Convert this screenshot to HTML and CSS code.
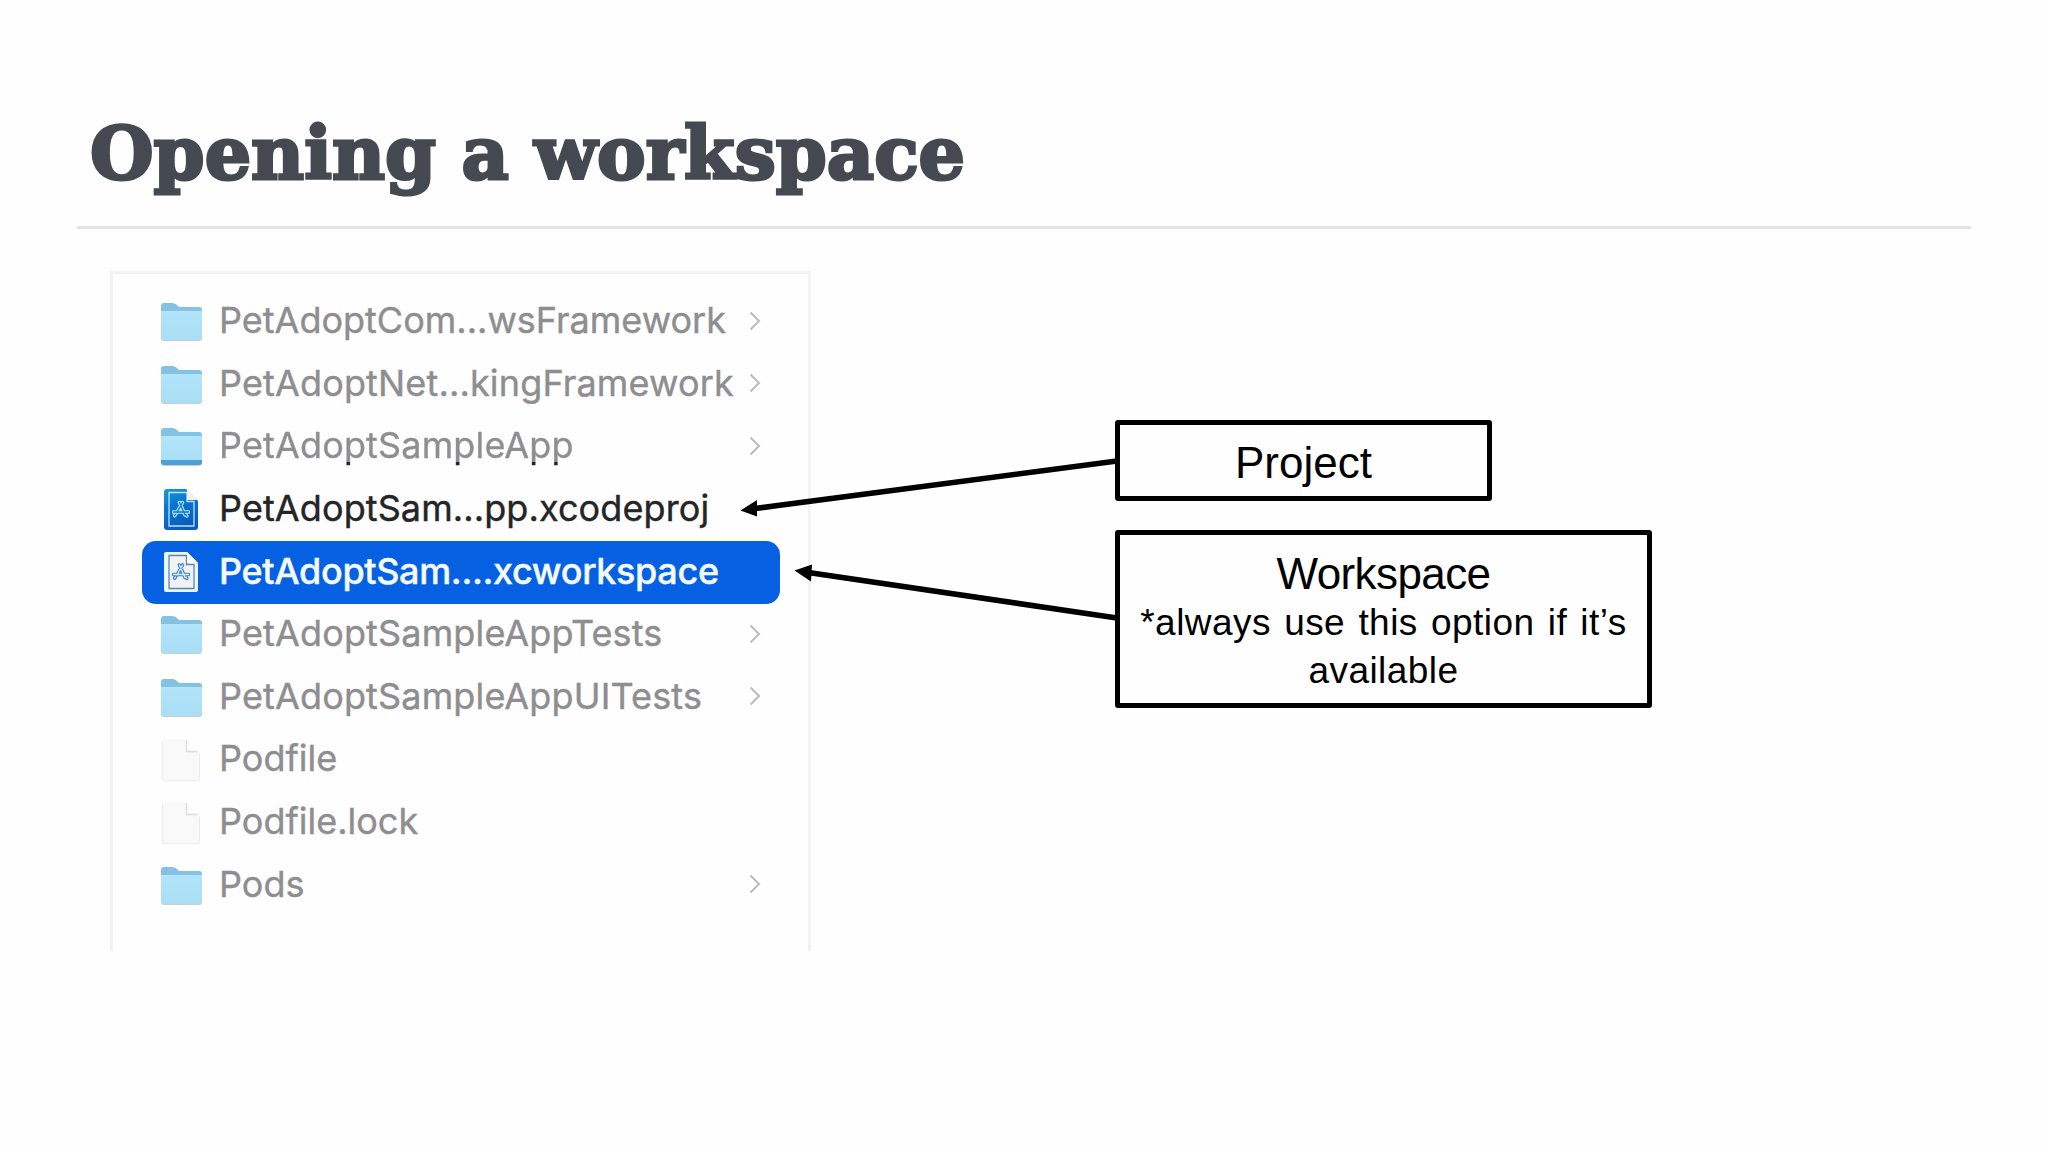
FILE: index.html
```html
<!DOCTYPE html>
<html lang="en">
<head>
    <meta charset="UTF-8">
    <meta name="viewport" content="width=device-width, initial-scale=1.0">
    <title>Opening a workspace</title>
    <link rel="stylesheet" href="styles.css">
</head>
<body>

<!-- Shared icons -->
<svg class="defs" width="0" height="0">
    <defs>
        <linearGradient id="folder-front" x1="0" y1="0" x2="0" y2="1">
            <stop offset="0" stop-color="#b2e4fa"/>
            <stop offset="1" stop-color="#a9def5"/>
        </linearGradient>
        <linearGradient id="project-blue" x1="0" y1="0" x2="0.4" y2="1">
            <stop offset="0" stop-color="#1c9bc8"/>
            <stop offset="0.4" stop-color="#0878d4"/>
            <stop offset="1" stop-color="#0a5cbc"/>
        </linearGradient>
        <symbol id="folder" viewBox="0 0 44 44">
            <path d="M2 36V6q0-3 3-3h8q3 0 5 2l2 2h20q3 0 3 3v26z" fill="#84c2e3"/>
            <path d="M2 12h41v26q0 3-3 3H5q-3 0-3-3z" fill="#9fb3bd" opacity="0.6"/>
            <path d="M2 11h41v26q0 3-3 3H5q-3 0-3-3z" fill="url(#folder-front)"/>
        </symbol>
        <symbol id="file" viewBox="0 0 44 44">
            <path d="M7 2h20l14 14v24q0 3-3 3H6q-3 0-3-3V5q0-3 4-3z" fill="#ececec"/>
            <path d="M7 1h20l13 13v25q0 3-3 3H7q-3 0-3-3V4q0-3 3-3z" fill="#f9f9fa"/>
            <path d="M28 1v12h12z" fill="#fdfdfd"/>
            <path d="M27.500 2v11.500h11" fill="none" stroke="#dcdcdc" stroke-width="1.300"/>
        </symbol>
        <symbol id="app-mark" viewBox="0 0 18 18">
            <g fill="none" stroke="currentColor" stroke-width="3.600" stroke-linecap="round">
                <path d="M7.500 2l5.500 12.500M10.500 2L5 12M1.500 11.500h15M3.500 14l-.8 1.200M14 14l.8 1.500"/>
            </g>
            <g class="mark-core" fill="none" stroke-width="1.300" stroke-linecap="round">
                <path d="M7.500 2l5.500 12.500M10.500 2L5 12M1.500 11.500h15M3.500 14l-.8 1.200M14 14l.8 1.500"/>
            </g>
        </symbol>
        <symbol id="chevron" viewBox="0 0 12 20">
            <path d="M1.500 1.500L10 10l-8.500 8.500" fill="none" stroke="#bcbcbe" stroke-width="2"/>
        </symbol>
    </defs>
</svg>

<main class="slide">
    <h1>Opening a workspace</h1>

    <div class="content">
        <!-- File browser column -->
        <ul class="browser">
            <li class="row">
                <svg class="icon"><use href="#folder"/></svg>
                <span class="name">PetAdoptCom...wsFramework</span>
                <svg class="chevron"><use href="#chevron"/></svg>
            </li>
            <li class="row">
                <svg class="icon"><use href="#folder"/></svg>
                <span class="name wide">PetAdoptNet...kingFramework</span>
                <svg class="chevron"><use href="#chevron"/></svg>
            </li>
            <li class="row">
                <svg class="icon" viewBox="0 0 44 44">
                    <use href="#folder"/>
                    <path d="M2 35h41v2q0 3-3 3H5q-3 0-3-3z" fill="#4a9fd6"/>
                </svg>
                <span class="name wide dark-tips">PetAdoptSampleApp</span>
                <svg class="chevron"><use href="#chevron"/></svg>
            </li>
            <li class="row active">
                <svg class="icon project" viewBox="0 0 44 44">
                    <path d="M8 1h19l12 12v26q0 3-3 3H8q-3 0-3-3V4q0-3 3-3z" fill="url(#project-blue)"/>
                    <path d="M10 4.500h18v9h7V38H10z" fill="none" stroke="#b9e3fa" stroke-width="1.300"/>
                    <path d="M28 1l11 11H28z" fill="#eef0f2"/>
                    <use href="#app-mark" x="13" y="12.500" width="18" height="18"/>
                </svg>
                <span class="name">PetAdoptSam...pp.xcodeproj</span>
            </li>
            <li class="row selected">
                <svg class="icon workspace" viewBox="0 0 44 44">
                    <path d="M8 1h20l11 11v27q0 2-2 2H7q-2 0-2-2V3q0-2 2-2z" fill="#e9f6fd"/>
                    <path d="M10 4.500h17.500v9H35V37.500H10z" fill="#f1f2f3" stroke="#5c87ad" stroke-width="1.300"/>
                    <path d="M28 1l11 11H28z" fill="#fff"/>
                    <use href="#app-mark" x="13" y="12" width="18" height="18"/>
                </svg>
                <span class="name">PetAdoptSam....xcworkspace</span>
            </li>
            <li class="row">
                <svg class="icon"><use href="#folder"/></svg>
                <span class="name wide">PetAdoptSampleAppTests</span>
                <svg class="chevron"><use href="#chevron"/></svg>
            </li>
            <li class="row">
                <svg class="icon"><use href="#folder"/></svg>
                <span class="name wide">PetAdoptSampleAppUITests</span>
                <svg class="chevron"><use href="#chevron"/></svg>
            </li>
            <li class="row">
                <svg class="icon"><use href="#file"/></svg>
                <span class="name">Podfile</span>
            </li>
            <li class="row">
                <svg class="icon"><use href="#file"/></svg>
                <span class="name">Podfile.lock</span>
            </li>
            <li class="row">
                <svg class="icon"><use href="#folder"/></svg>
                <span class="name">Pods</span>
                <svg class="chevron"><use href="#chevron"/></svg>
            </li>
        </ul>

        <!-- Labels -->
        <div class="callouts">
            <div class="callout callout-project">
                <p class="term">Project</p>
            </div>
            <div class="callout callout-workspace">
                <p class="term">Workspace</p>
                <p class="note">*always use this option if it’s available</p>
            </div>
        </div>
    </div>

    <!-- Arrows from the labels to the rows -->
    <svg class="arrows" viewBox="0 0 2048 1152">
        <path d="M1117 461L755 508.500M1117 618L810 572.800" stroke="#000" stroke-width="5.600"/>
        <path d="M740.500 510.500L757 500v16.500zM794.500 570.500L812 564.500l-1 17z"/>
    </svg>
</main>

</body>
</html>
```
FILE: styles.css
```css
* {
    box-sizing: border-box;
}
body {
    margin: 0;
    background-color: #fefefe;
    font-family: "Liberation Sans", Arial, sans-serif;
}
.defs {
    display: block;
}
.slide {
    position: relative;
    width: 2048px;
    height: 1152px;
    padding: 109px 77px 0;
    overflow: hidden;
}
h1 {
    height: 120px;
    margin: 0;
    padding-left: 13px;
    border-bottom: 3px solid #e3e4e8;
    color: #444952;
    font-family: "DejaVu Serif", serif;
    font-size: 73px;
    font-weight: bold;
    line-height: 88px;
    letter-spacing: 0;
    white-space: nowrap;
    -webkit-text-stroke: 3px #444952;
}
.content {
    display: flex;
    align-items: flex-start;
    padding: 42px 0 0 33px;
}
.browser {
    width: 701px;
    height: 680px;
    margin: 0;
    padding: 17px 28px 0 29px;
    border: 3px solid #f2f2f5;
    border-bottom: none;
    list-style: none;
}
.row {
    display: flex;
    align-items: center;
    height: 62.6px;
    padding: 0 19px 0 17px;
    color: #8e8e90;
    border-radius: 14px;
}
.icon {
    width: 44px;
    height: 44px;
    margin-right: 16px;
    flex-shrink: 0;
}
.name {
    padding-bottom: 3px;
    font-family: Inter, sans-serif;
    font-size: 36px;
    line-height: 59px;
    white-space: nowrap;
    -webkit-text-stroke: 0.4px currentColor;
}
.wide {
    letter-spacing: 0.15px;
}
.dark-tips {
    background: linear-gradient(#8e8e90 46px, #252527 46px);
    background-clip: text;
    -webkit-background-clip: text;
    color: transparent;
}
.chevron {
    width: 12px;
    height: 20px;
    margin: 0 0 3px auto;
}
.active {
    color: #252527;
}
.active .name {
    letter-spacing: 0.1px;
}
.selected {
    background-color: #0561e2;
    color: #f4faff;
}
.selected .name {
    font-weight: 500;
    letter-spacing: -0.35px;
}
.project {
    --mark-core: #0878d4;
    color: #b9e3fa;
}
.workspace {
    --mark-core: #dceefa;
    color: #3d83cf;
}
.mark-core {
    stroke: var(--mark-core);
}
.callouts {
    display: flex;
    flex-direction: column;
    align-items: flex-start;
    gap: 29px;
    margin: 149px 0 0 304px;
}
.callout {
    display: flex;
    flex-direction: column;
    justify-content: center;
    padding-top: 5px;
    border: 5.5px solid #000;
    border-radius: 3px;
    color: #000;
    text-align: center;
}
.callout p {
    margin: 0;
}
.callout-project {
    width: 377px;
    height: 81px;
}
.callout-workspace {
    width: 537px;
    height: 178px;
}
.term {
    font-size: 44px;
    line-height: 50px;
}
.callout-workspace .term {
    letter-spacing: -0.6px;
}
.note {
    font-size: 37px;
    line-height: 48px;
    letter-spacing: 0.45px;
    word-spacing: 2.5px;
}
.arrows {
    position: absolute;
    top: 0;
    left: 0;
    width: 2048px;
    height: 1152px;
    pointer-events: none;
}
```
